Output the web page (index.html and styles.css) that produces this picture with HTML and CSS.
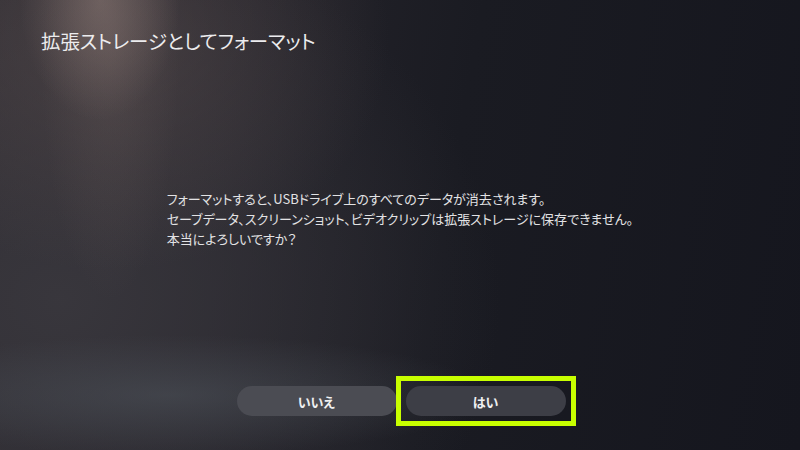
FILE: index.html
```html
<!DOCTYPE html>
<html lang="ja">
<head>
<meta charset="utf-8">
<link rel="stylesheet" href="styles.css">
</head>
<body>
<div class="screen">
  <h1 class="title">拡張ストレージとしてフォーマット</h1>
  <div class="message-wrap">
    <div class="message">
      <p>フォーマットすると、USBドライブ上のすべてのデータが消去されます。</p>
      <p>セーブデータ、スクリーンショット、ビデオクリップは拡張ストレージに保存できません。</p>
      <p>本当によろしいですか？</p>
    </div>
  </div>
  <div class="buttons">
    <button class="btn btn-no">いいえ</button>
    <button class="btn btn-yes">はい</button>
  </div>
</div>
</body>
</html>
```

FILE: styles.css
```css
html, body {
  margin: 0;
  padding: 0;
  background: #17181f;
}
.screen {
  width: 800px;
  height: 450px;
  overflow: hidden;
  display: flex;
  flex-direction: column;
  font-family: "Noto Sans CJK JP", "Noto Sans", sans-serif;
  color: #e6e6e8;
  background:
    radial-gradient(ellipse 80px 120px at 100px 0px, rgba(150,130,125,0.45), rgba(150,130,125,0) 100%),
    radial-gradient(ellipse 70px 260px at 110px 40px, rgba(120,105,102,0.25), rgba(120,105,102,0) 100%),
    radial-gradient(ellipse 280px 230px at 110px 40px, rgba(95,82,82,0.5), rgba(95,82,82,0) 100%),
    radial-gradient(ellipse 320px 60px at 170px 395px, rgba(80,86,94,0.5), rgba(80,86,94,0) 100%),
    radial-gradient(ellipse 440px 380px at 60px 300px, rgba(58,56,62,0.9), rgba(58,56,62,0) 100%),
    linear-gradient(100deg, #2c2a30 0%, #24232a 30%, #1a1b22 55%, #15161e 100%);
}
.title {
  margin: 0;
  padding: 29px 0 0 41px;
  font-size: 19.4px;
  font-weight: 400;
  line-height: 24px;
  font-feature-settings: "palt";
  color: #ececee;
}
.message-wrap {
  display: flex;
  justify-content: center;
  margin-top: 136px;
}
.message {
  font-size: 13px;
  line-height: 20px;
  font-feature-settings: "palt";
  color: #e2e2e4;
}
.message p {
  margin: 0;
}
.buttons {
  display: flex;
  justify-content: center;
  gap: 9px;
  margin-top: 137px;
  padding-left: 2px;
}
.btn {
  width: 160px;
  height: 30px;
  border: none;
  border-radius: 15px;
  font-family: "Noto Sans CJK JP", "Noto Sans", sans-serif;
  font-size: 13px;
  font-weight: 700;
  color: #f0f0f2;
  padding: 0;
  font-feature-settings: "palt";
}
.btn-no {
  background: #4b4c53;
}
.btn-yes {
  position: relative;
  background: #3d3e46;
}
.btn-yes::after {
  content: "";
  position: absolute;
  left: -10px;
  top: -10px;
  right: -10px;
  bottom: -10px;
  border: 5px solid #c8ff00;
  pointer-events: none;
}
```
